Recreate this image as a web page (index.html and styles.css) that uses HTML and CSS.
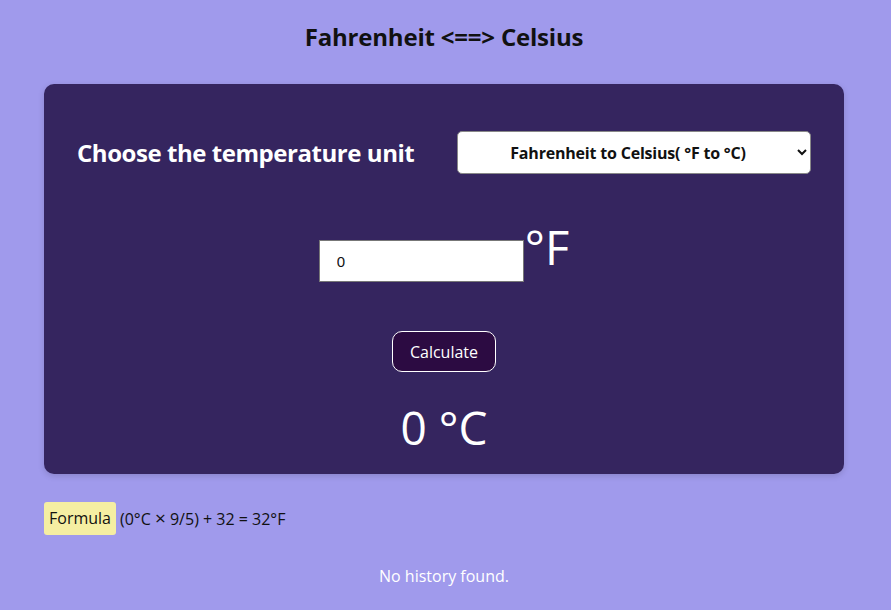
FILE: index.html
```html
<!DOCTYPE html>
<html>
<head>
<meta charset="utf-8">
<link rel="stylesheet" href="styles.css">
</head>
<body>
<h1 class="title">Fahrenheit &lt;==&gt; Celsius</h1>
<div class="card">
  <div class="unit-row">
    <h2 class="unit-label">Choose the temperature unit</h2>
    <select class="unit-select">
      <option>Fahrenheit to Celsius( °F to °C)</option>
    </select>
  </div>
  <div class="input-row">
    <input class="temp-input" type="text" value="0">
    <span class="unit-sign">°F</span>
  </div>
  <div class="btn-row">
    <button class="calc-btn">Calculate</button>
  </div>
  <div class="result">0 °C</div>
</div>
<div class="formula">
  <span class="formula-tag">Formula</span>
  <span class="formula-text">(0°C <span class="times">×</span> 9/5) + 32 = 32°F</span>
</div>
<p class="history">No history found.</p>
</body>
</html>
```
FILE: styles.css
```css
html, body {
  margin: 0;
  padding: 0;
}
body {
  background: #a09aec;
  font-family: "Open Sans", "Noto Sans", sans-serif;
  padding: 0 47px 0 44px;
  height: 610px;
  box-sizing: border-box;
}
.title {
  margin: 0;
  padding-top: 20px;
  height: 84px;
  box-sizing: border-box;
  text-align: center;
  font-size: 24px;
  font-weight: 700;
  color: #111;
  letter-spacing: -0.2px;
}
.card {
  background: #35255f;
  border-radius: 10px;
  height: 390px;
  box-sizing: border-box;
  padding-top: 47px;
  box-shadow: 0 2px 6px rgba(0,0,0,0.15);
}
.unit-row {
  display: flex;
  align-items: center;
  justify-content: space-between;
  padding: 0 33px 0 33px;
}
.unit-label {
  margin: 0;
  color: #fff;
  font-size: 24px;
  font-weight: 700;
  letter-spacing: -0.45px;
}
.unit-select {
  width: 354px;
  height: 43px;
  border-radius: 5px;
  border: 1px solid #888;
  background: #fff;
  font-family: inherit;
  font-size: 16px;
  font-weight: 700;
  text-align: center;
  text-align-last: center;
  color: #111;
  letter-spacing: -0.2px;
}
.input-row {
  display: flex;
  justify-content: center;
  align-items: flex-start;
  margin-top: 55px;
}
.temp-input {
  width: 205px;
  height: 42px;
  box-sizing: border-box;
  border: 1px solid #777;
  padding: 0 17px;
  font-family: "Liberation Sans", sans-serif;
  font-size: 15px;
  color: #111;
  margin-top: 11px;
}
.unit-sign {
  color: #fff;
  font-size: 47px;
  line-height: 36px;
  margin-left: 1px;
}
.btn-row {
  display: flex;
  justify-content: center;
  margin-top: 49px;
}
.calc-btn {
  width: 104px;
  height: 41px;
  background: #2c0b42;
  color: #fff;
  border: 1px solid #fff;
  border-radius: 10px;
  font-family: inherit;
  font-size: 16px;
}
.result {
  text-align: center;
  color: #fff;
  font-size: 46px;
  margin-top: 22px;
  line-height: 66px;
}
.formula {
  display: flex;
  align-items: center;
  margin-top: 28px;
  font-size: 16px;
  color: #111;
}
.formula-tag {
  background: #f5eea2;
  border-radius: 3px;
  padding: 0 5px;
  height: 33px;
  line-height: 33px;
  margin-right: 4px;
}
.times {
  font-size: 19px;
  line-height: 1;
}
.history {
  text-align: center;
  color: #fff;
  font-size: 16px;
  margin: 30px 0 0 0;
}
```
